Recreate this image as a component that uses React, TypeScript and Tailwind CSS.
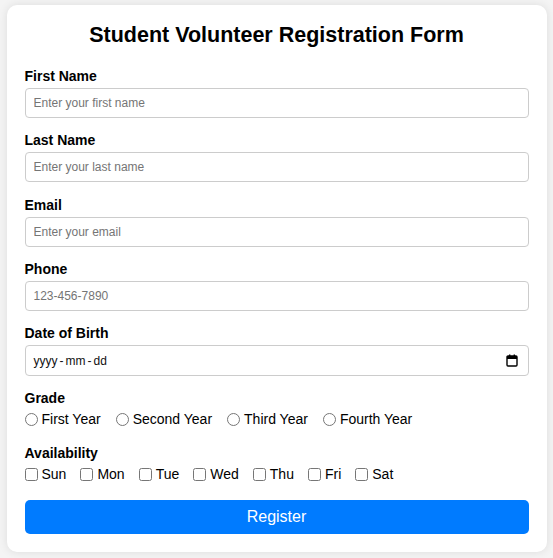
import React from "react";

const fields = [
  { label: "First Name", type: "text", ph: "Enter your first name" },
  { label: "Last Name", type: "text", ph: "Enter your last name" },
  { label: "Email", type: "email", ph: "Enter your email" },
  { label: "Phone", type: "tel", ph: "123-456-7890" },
];

const grades = ["First Year", "Second Year", "Third Year", "Fourth Year"];
const days = ["Sun", "Mon", "Tue", "Wed", "Thu", "Fri", "Sat"];

function CalendarIcon() {
  return (
    <svg width="12" height="13" viewBox="0 0 12 13" fill="none">
      <rect x="1" y="2" width="10" height="10" rx="1" stroke="#000" strokeWidth="1.4" />
      <rect x="1" y="2" width="10" height="3" fill="#000" />
      <rect x="3" y="0.5" width="1.4" height="2" fill="#000" />
      <rect x="7.6" y="0.5" width="1.4" height="2" fill="#000" />
    </svg>
  );
}

export default function App() {
  return (
    <div
      className="min-h-[558px] w-full bg-[#f4f4f4] pt-[5px] px-[6px]"
      style={{ fontFamily: '"Liberation Sans", Arial, sans-serif' }}
    >
      <div className="mx-auto w-[540px] rounded-[10px] bg-white p-[18px] shadow-[0_0_10px_rgba(0,0,0,0.1)]">
        <h2 className="text-center text-[21.5px] font-bold leading-[24px] text-black mb-[21px]">
          Student Volunteer Registration Form
        </h2>
        {fields.map((f) => (
          <div key={f.label} className="mb-[14.25px]">
            <label className="block text-[14px] font-bold leading-[16px] text-black mb-[4px]">
              {f.label}
            </label>
            <input
              type={f.type}
              placeholder={f.ph}
              className="block w-full h-[30px] rounded-[4px] border border-[#ccc] px-[8px] text-[12px] placeholder:text-[#757575] outline-none"
            />
          </div>
        ))}
        <div className="mb-[14px]">
          <label className="block text-[14px] font-bold leading-[16px] text-black mb-[4px]">
            Date of Birth
          </label>
          <div className="flex h-[31px] w-full items-center justify-between rounded-[4px] border border-[#ccc] pl-[8px] pr-[10px] text-[12px] text-[#111]">
            <span className="flex items-center gap-[2px]">
              <span>yyyy</span>
              <span>-</span>
              <span>mm</span>
              <span>-</span>
              <span>dd</span>
            </span>
            <CalendarIcon />
          </div>
        </div>
        <div className="mb-[18px]">
          <label className="block text-[14px] font-bold leading-[16px] text-black mb-[5px]">
            Grade
          </label>
          <div className="flex items-center gap-x-[15px] text-[14px] leading-[16px] text-black">
            {grades.map((g) => (
              <label key={g} className="flex items-center gap-[4px]">
                <input type="radio" name="grade" className="m-0 h-[13px] w-[13px]" />
                <span>{g}</span>
              </label>
            ))}
          </div>
        </div>
        <div className="mb-[18px]">
          <label className="block text-[14px] font-bold leading-[16px] text-black mb-[5px]">
            Availability
          </label>
          <div className="flex items-center gap-x-[14px] text-[14px] leading-[16px] text-black">
            {days.map((d) => (
              <label key={d} className="flex items-center gap-[4px]">
                <input type="checkbox" className="m-0 h-[13px] w-[13px]" />
                <span>{d}</span>
              </label>
            ))}
          </div>
        </div>
        <button className="block w-full h-[34px] rounded-[5px] bg-[#007bff] text-[16px] text-white">
          Register
        </button>
      </div>
    </div>
  );
}
